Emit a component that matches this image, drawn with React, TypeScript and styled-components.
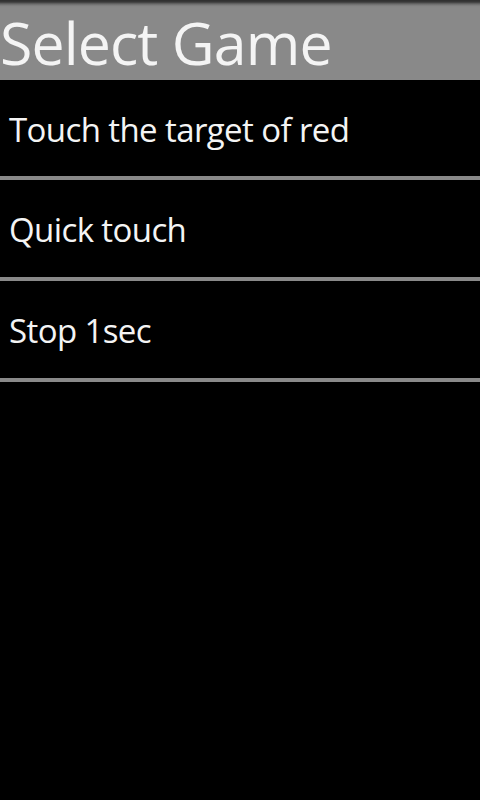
import React from "react";
import styled, { createGlobalStyle } from "styled-components";

const Global = createGlobalStyle`
  html, body { margin: 0; padding: 0; background: #000; }
  body { width: 480px; height: 800px; overflow: hidden; }
`;

const Screen = styled.div`
  width: 480px;
  height: 800px;
  background: #000;
  display: flex;
  flex-direction: column;
  font-family: "Open Sans", "DejaVu Sans", sans-serif;
`;

const TitleBar = styled.header`
  height: 80px;
  box-sizing: border-box;
  background: linear-gradient(to bottom, #2e2e2e 0px, #3a3a3a 2px, #6a6a6a 4px, #858585 6px, #898989 8px, #898989 100%);
  display: flex;
  align-items: center;
  padding: 4px 0 0 0;
`;

const Title = styled.h1`
  margin: 0;
  font-size: 59px;
  font-weight: 400;
  color: #f4f4f4;
  line-height: 1;
  letter-spacing: -0.9px;
`;

const List = styled.ul`
  list-style: none;
  margin: 0;
  padding: 0;
  display: flex;
  flex-direction: column;
`;

const Item = styled.li<{ $h: number }>`
  height: ${(p) => p.$h}px;
  display: flex;
  align-items: center;
  padding-left: 9px;
  font-size: 33px;
  letter-spacing: -0.6px;
  color: #f4f4f4;
  border-bottom: 4px solid #898989;
  padding-top: 2px;
  box-sizing: content-box;
`;

const items: { label: string; h: number }[] = [
  { label: "Touch the target of red", h: 94 },
  { label: "Quick touch", h: 95 },
  { label: "Stop 1sec", h: 95 },
];

export default function App() {
  return (
    <Screen>
      <Global />
      <TitleBar>
        <Title>Select Game</Title>
      </TitleBar>
      <List>
        {items.map((it) => (
          <Item key={it.label} $h={it.h}>
            {it.label}
          </Item>
        ))}
      </List>
    </Screen>
  );
}
